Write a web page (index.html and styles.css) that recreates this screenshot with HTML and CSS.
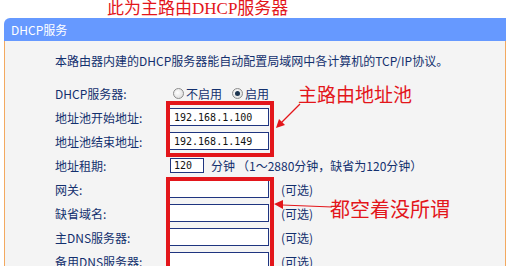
FILE: index.html
```html
<!DOCTYPE html>
<html lang="zh-CN">
<head>
    <meta charset="UTF-8">
    <meta name="viewport" content="width=device-width, initial-scale=1.0">
    <title>DHCP服务</title>
    <link rel="stylesheet" href="styles.css">
</head>
<body>
    <div class="page-title">此为主路由DHCP服务器</div>
    <div class="panel">
        <div class="panel-head">DHCP服务</div>
        <div class="panel-body">
            <p class="intro">本路由器内建的DHCP服务器能自动配置局域网中各计算机的TCP/IP协议。</p>
            <div class="form-row">
                <span class="label">DHCP服务器:</span>
                <span class="field radios">
                    <span class="radio"></span><span class="radio-text">不启用</span>
                    <span class="radio checked"></span><span class="radio-text">启用</span>
                </span>
            </div>
            <div class="form-row">
                <span class="label">地址池开始地址:</span>
                <span class="field"><input class="text-box" type="text" value="192.168.1.100"></span>
            </div>
            <div class="form-row">
                <span class="label">地址池结束地址:</span>
                <span class="field"><input class="text-box" type="text" value="192.168.1.149"></span>
            </div>
            <div class="form-row">
                <span class="label">地址租期:</span>
                <span class="field">
                    <input class="text-box short" type="text" value="120">
                    <span class="unit">分钟</span><span class="hint">（1～2880分钟，缺省为120分钟）</span>
                </span>
            </div>
            <div class="form-row">
                <span class="label">网关:</span>
                <span class="field"><input class="text-box" type="text"><span class="opt">(可选)</span></span>
            </div>
            <div class="form-row">
                <span class="label">缺省域名:</span>
                <span class="field"><input class="text-box" type="text"><span class="opt">(可选)</span></span>
            </div>
            <div class="form-row">
                <span class="label">主DNS服务器:</span>
                <span class="field"><input class="text-box" type="text"><span class="opt">(可选)</span></span>
            </div>
            <div class="form-row">
                <span class="label">备用DNS服务器:</span>
                <span class="field"><input class="text-box" type="text"><span class="opt">(可选)</span></span>
            </div>
        </div>
    </div>

    <!-- red notes drawn over the screenshot -->
    <svg class="marks" width="515" height="266" viewBox="0 0 515 266">
        <rect x="168" y="103" width="104" height="52" fill="none" stroke="#e3161b" stroke-width="4"/>
        <rect x="168" y="179" width="104" height="100" fill="none" stroke="#e3161b" stroke-width="4"/>
        <line x1="300" y1="104" x2="281" y2="123" stroke="#e3161b" stroke-width="1.2"/>
        <polygon points="276,128 279,119 285,125" fill="#e3161b"/>
        <line x1="332" y1="207" x2="282" y2="205" stroke="#e3161b" stroke-width="1.2"/>
        <polygon points="274,204 283,200 283,209" fill="#e3161b"/>
    </svg>
    <div class="note note-pool">主路由地址池</div>
    <div class="note note-empty">都空着没所谓</div>
</body>
</html>
```

FILE: styles.css
```css
:root {
    --head-blue: #6699ff;
    --panel-bg: #f4f4f4;
    --edge: #f3a960;
    --ink: #13306e;
    --note-red: #e3161b;
}
body {
    margin: 0;
    background: #fff;
    font-family: "Noto Sans CJK SC", sans-serif;
    font-size: 12px;
    color: var(--ink);
    position: relative;
    height: 266px;
    overflow: hidden;
}
.page-title {
    height: 18px;
    padding-left: 107px;
    font-family: "Liberation Serif", "Noto Sans CJK SC", serif;
    font-size: 17px;
    line-height: 17px;
    color: var(--note-red);
}
.panel { margin: 0 9px 0 4px; }
.panel-head {
    height: 23px;
    line-height: 23px;
    padding-left: 7px;
    background: var(--head-blue);
    color: #fff;
    border-radius: 6px 0 0 0;
}
.panel-body {
    background: var(--panel-bg);
    border-left: 1px solid var(--edge);
    border-right: 1px solid var(--edge);
    padding: 12px 0 0 50px;
}
.intro {
    margin: 0 0 12px;
    line-height: 16px;
}
.form-row {
    display: flex;
    align-items: center;
    height: 24px;
}
.label { width: 114px; flex: none; }
.field { display: flex; align-items: center; }
.radios { margin-left: 4px; }
.radio {
    width: 11px;
    height: 11px;
    box-sizing: border-box;
    border: 1px solid #8c8c8c;
    border-radius: 50%;
    background: radial-gradient(circle at 40% 40%, #fff, #d6d6d6);
    display: inline-flex;
    align-items: center;
    justify-content: center;
    margin-right: 2px;
}
.radio.checked::after {
    content: "";
    width: 5px;
    height: 5px;
    border-radius: 50%;
    background: #1d3550;
}
.radio-text { margin-right: 10px; }
.text-box {
    box-sizing: border-box;
    width: 100px;
    height: 18px;
    margin: 0;
    padding: 0 4px;
    border: 1px solid #1f3580;
    background: #fff;
    font-family: "DejaVu Sans Mono", monospace;
    font-size: 10px;
    color: #111;
    outline: none;
}
.text-box.short {
    width: 34px;
    height: 15px;
    margin-left: 1px;
    padding: 0 3px;
}
.unit { margin-left: 7px; }
.hint { margin-left: 2px; }
.opt { margin-left: 12px; }
.marks {
    position: absolute;
    top: 0;
    left: 0;
    pointer-events: none;
}
.note {
    position: absolute;
    color: var(--note-red);
    line-height: 20px;
    white-space: nowrap;
}
.note-pool { left: 298px; top: 84px; font-size: 19px; }
.note-empty { left: 330px; top: 199px; font-size: 20px; }
```
